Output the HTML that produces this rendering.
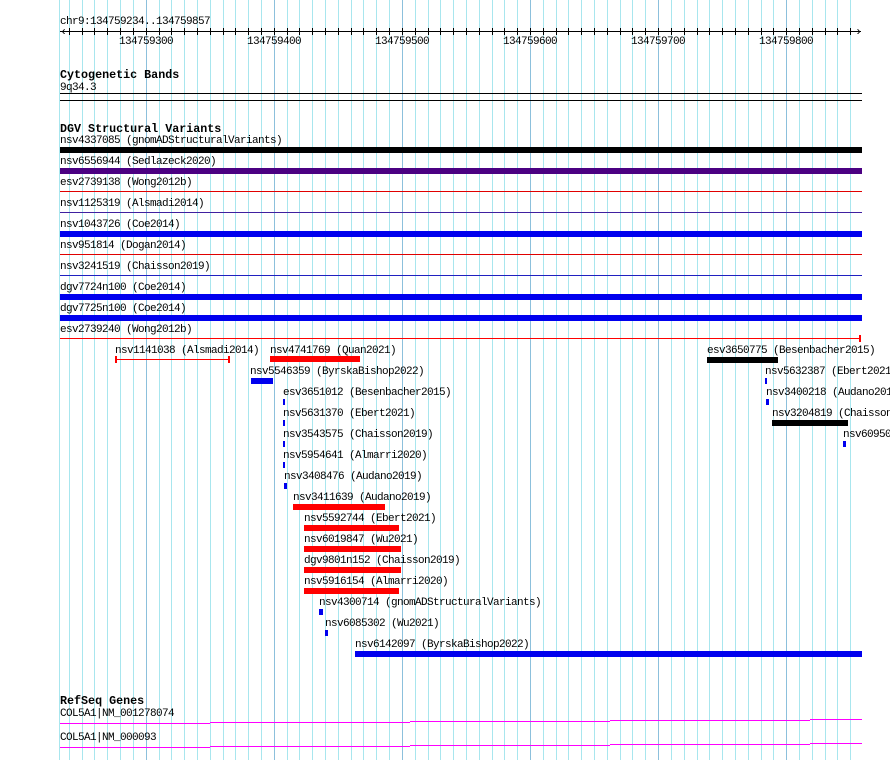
<!DOCTYPE html>
<html><head><meta charset="utf-8"><style>
html,body{margin:0;padding:0;background:#fff;width:890px;height:760px;overflow:hidden;position:relative}
.t{position:absolute;font-family:"Liberation Mono",monospace;font-size:11px;letter-spacing:-0.6px;line-height:12px;white-space:nowrap;color:#000;margin-top:1px}
.h{position:absolute;font-family:"Liberation Mono",monospace;font-size:11.7px;font-weight:bold;line-height:12px;white-space:nowrap;color:#000;margin-top:1px}
.b{position:absolute}
.g{position:absolute;top:0;width:1px;height:760px;background:#a8e6ee}
.gm{background:#8cc0dc}
</style></head><body>
<div id="grid"></div>
<div id="ruler"></div>
<div class="t" style="left:60px;top:15px">chr9:134759234..134759857</div>
<div class="b" style="left:60px;top:31px;width:801px;height:1px;background:#000"></div>
<div class="t" style="left:60px;top:25px;font-size:12px">‹</div>
<div class="t" style="left:855px;top:25px;font-size:12px">›</div>

<div class="h" style="left:60px;top:68px">Cytogenetic Bands</div>
<div class="t" style="left:60px;top:81px">9q34.3</div>
<div class="b" style="left:60px;top:93px;width:802px;height:1px;background:#000"></div>
<div class="b" style="left:60px;top:100px;width:802px;height:1px;background:#000"></div>

<div class="h" style="left:60px;top:122px">DGV Structural Variants</div>
<div class="t" style="left:60px;top:134px">nsv4337085 (gnomADStructuralVariants)</div>
<div class="b" style="left:60px;top:147px;width:802px;height:6px;background:#000"></div>
<div class="t" style="left:60px;top:155px">nsv6556944 (Sedlazeck2020)</div>
<div class="b" style="left:60px;top:168px;width:802px;height:6px;background:#4b0082"></div>
<div class="t" style="left:60px;top:176px">esv2739138 (Wong2012b)</div>
<div class="b" style="left:60px;top:191px;width:802px;height:1px;background:#e00000"></div>
<div class="t" style="left:60px;top:197px">nsv1125319 (Alsmadi2014)</div>
<div class="b" style="left:60px;top:212px;width:802px;height:1px;background:#4020a0"></div>
<div class="t" style="left:60px;top:218px">nsv1043726 (Coe2014)</div>
<div class="b" style="left:60px;top:231px;width:802px;height:6px;background:#0000ee"></div>
<div class="t" style="left:60px;top:239px">nsv951814 (Dogan2014)</div>
<div class="b" style="left:60px;top:254px;width:802px;height:1px;background:#e00000"></div>
<div class="t" style="left:60px;top:260px">nsv3241519 (Chaisson2019)</div>
<div class="b" style="left:60px;top:275px;width:802px;height:1px;background:#2020c0"></div>
<div class="t" style="left:60px;top:281px">dgv7724n100 (Coe2014)</div>
<div class="b" style="left:60px;top:294px;width:802px;height:6px;background:#0000ee"></div>
<div class="t" style="left:60px;top:302px">dgv7725n100 (Coe2014)</div>
<div class="b" style="left:60px;top:315px;width:802px;height:6px;background:#0000ee"></div>
<div class="t" style="left:60px;top:323px">esv2739240 (Wong2012b)</div>
<div class="b" style="left:60px;top:338px;width:800px;height:1px;background:#f00"></div>
<div class="b" style="left:859px;top:335px;width:2px;height:7px;background:#f00"></div>

<div class="t" style="left:115px;top:344px">nsv1141038 (Alsmadi2014)</div>
<div class="b" style="left:116px;top:359px;width:113px;height:1px;background:#f00"></div>
<div class="b" style="left:115px;top:356px;width:2px;height:7px;background:#f00"></div>
<div class="b" style="left:228px;top:356px;width:2px;height:7px;background:#f00"></div>
<div class="t" style="left:270px;top:344px">nsv4741769 (Quan2021)</div>
<div class="b" style="left:270px;top:356px;width:90px;height:6px;background:#f00"></div>
<div class="t" style="left:250px;top:365px">nsv5546359 (ByrskaBishop2022)</div>
<div class="b" style="left:251px;top:378px;width:22px;height:6px;background:#0000ee"></div>
<div class="t" style="left:283px;top:386px">esv3651012 (Besenbacher2015)</div>
<div class="b" style="left:283px;top:399px;width:2px;height:6px;background:#0000ee"></div>
<div class="t" style="left:283px;top:407px">nsv5631370 (Ebert2021)</div>
<div class="b" style="left:283px;top:420px;width:2px;height:6px;background:#0000ee"></div>
<div class="t" style="left:283px;top:428px">nsv3543575 (Chaisson2019)</div>
<div class="b" style="left:283px;top:441px;width:2px;height:6px;background:#0000ee"></div>
<div class="t" style="left:283px;top:449px">nsv5954641 (Almarri2020)</div>
<div class="b" style="left:283px;top:462px;width:2px;height:6px;background:#0000ee"></div>
<div class="t" style="left:284px;top:470px">nsv3408476 (Audano2019)</div>
<div class="b" style="left:284px;top:483px;width:3px;height:6px;background:#0000ee"></div>
<div class="t" style="left:293px;top:491px">nsv3411639 (Audano2019)</div>
<div class="b" style="left:293px;top:504px;width:92px;height:6px;background:#f00"></div>
<div class="t" style="left:304px;top:512px">nsv5592744 (Ebert2021)</div>
<div class="b" style="left:304px;top:525px;width:95px;height:6px;background:#f00"></div>
<div class="t" style="left:304px;top:533px">nsv6019847 (Wu2021)</div>
<div class="b" style="left:304px;top:546px;width:97px;height:6px;background:#f00"></div>
<div class="t" style="left:304px;top:554px">dgv9801n152 (Chaisson2019)</div>
<div class="b" style="left:304px;top:567px;width:97px;height:6px;background:#f00"></div>
<div class="t" style="left:304px;top:575px">nsv5916154 (Almarri2020)</div>
<div class="b" style="left:304px;top:588px;width:95px;height:6px;background:#f00"></div>
<div class="t" style="left:319px;top:596px">nsv4300714 (gnomADStructuralVariants)</div>
<div class="b" style="left:319px;top:609px;width:4px;height:6px;background:#0000ee"></div>
<div class="t" style="left:325px;top:617px">nsv6085302 (Wu2021)</div>
<div class="b" style="left:325px;top:630px;width:3px;height:6px;background:#0000ee"></div>
<div class="t" style="left:355px;top:638px">nsv6142097 (ByrskaBishop2022)</div>
<div class="b" style="left:355px;top:651px;width:507px;height:6px;background:#0000ee"></div>

<div class="t" style="left:707px;top:344px">esv3650775 (Besenbacher2015)</div>
<div class="b" style="left:707px;top:357px;width:71px;height:6px;background:#000"></div>
<div class="t" style="left:765px;top:365px">nsv5632387 (Ebert2021)</div>
<div class="b" style="left:765px;top:378px;width:2px;height:6px;background:#0000ee"></div>
<div class="t" style="left:766px;top:386px">nsv3400218 (Audano2019)</div>
<div class="b" style="left:766px;top:399px;width:3px;height:6px;background:#0000ee"></div>
<div class="t" style="left:772px;top:407px">nsv3204819 (Chaisson2019)</div>
<div class="b" style="left:772px;top:420px;width:76px;height:6px;background:#000"></div>
<div class="t" style="left:843px;top:428px">nsv6095000</div>
<div class="b" style="left:843px;top:441px;width:3px;height:6px;background:#0000ee"></div>

<div class="h" style="left:60px;top:694px">RefSeq Genes</div>
<div class="t" style="left:60px;top:707px">COL5A1|NM_001278074</div>
<div class="t" style="left:60px;top:731px">COL5A1|NM_000093</div>
<div id="genes"></div>
<script>
var g='';
for(var k=-7;k<=55;k++){var x=Math.round(145.7+12.81*k);if(x<59||x>855)continue;var m=(k%10==0);g+='<div class="g'+(m?' gm':'')+'" style="left:'+x+'px"></div>';}
g+='<div class="g" style="left:59px"></div>';
document.getElementById('grid').innerHTML=g;
var r='';
for(var k=-6;k<=55;k++){var x=Math.round(145.7+12.81*k);if(x<62||x>858)continue;r+='<div class="b" style="left:'+x+'px;top:28px;width:1px;height:7px;background:#000"></div>';
if(k%10==0){r+='<div class="t" style="left:'+(x-27)+'px;top:35px">'+(134759300+k*10)+'</div>';}}
document.getElementById('ruler').innerHTML=r;
var s='';var segs=[[60,110],[110,210],[210,310],[310,410],[410,510],[510,610],[610,710],[710,810],[810,862]];
for(var i=0;i<segs.length;i++){
s+='<div class="b" style="left:'+segs[i][0]+'px;top:'+Math.round(723-i*0.5)+'px;width:'+(segs[i][1]-segs[i][0])+'px;height:1px;background:#f0f"></div>';
s+='<div class="b" style="left:'+segs[i][0]+'px;top:'+Math.round(747-i*0.5)+'px;width:'+(segs[i][1]-segs[i][0])+'px;height:1px;background:#f0f"></div>';}
document.getElementById('genes').innerHTML=s;
</script>
</body></html>
